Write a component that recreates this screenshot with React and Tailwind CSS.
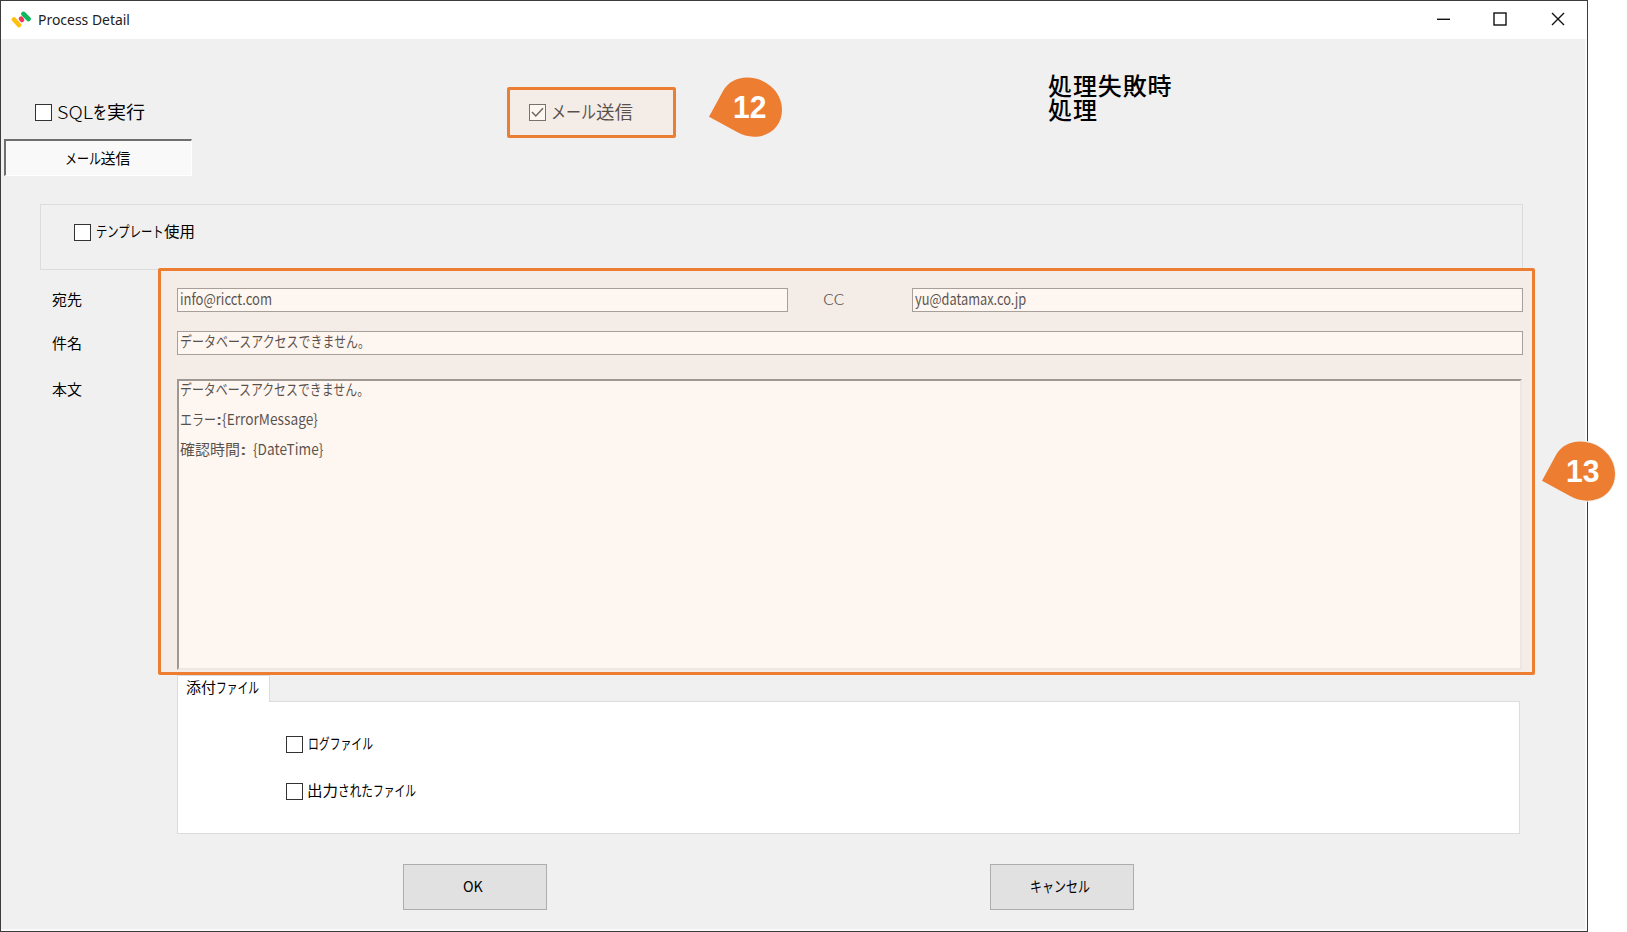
import React, { useLayoutEffect, useRef, useState } from "react";

// Squeezes a run of text into a fixed width, like the narrow UI Gothic kana
const Fit = ({ w, children }) => {
  const ref = useRef(null);
  const [scale, setScale] = useState(1);

  useLayoutEffect(() => {
    setScale(w / ref.current.offsetWidth);
  }, [w, children]);

  return (
    <span className="inline-block whitespace-nowrap" style={{ width: w }}>
      <span
        ref={ref}
        className="inline-block origin-left whitespace-pre"
        style={{ transform: `scaleX(${scale})` }}
      >
        {children}
      </span>
    </span>
  );
};

const Checkbox = ({ checked }) => (
  <span className="block h-[17px] w-[17px] shrink-0 border border-[#333333] bg-white">
    {checked && (
      <svg viewBox="0 0 15 15" className="h-[15px] w-[15px]" fill="none">
        <path d="M2 7L5.800 11L13 3.200" stroke="#222" strokeWidth="1.5" />
      </svg>
    )}
  </span>
);

const Field = ({ className, children }) => (
  <div
    className={`h-6 border border-[#7a7a7a] bg-white pl-0.5 text-[15px] ${className}`}
  >
    {children}
  </div>
);

const Callout = ({ number, className }) => (
  <div className={`absolute h-[62px] w-[76px] ${className}`}>
    <svg viewBox="0 0 76 62" className="absolute inset-0 h-[62px] w-[76px]">
      <path
        d="M2 40.7L16 15Q24 1.7 40 1.6C59 1.6 75 16 75 33.5C75 50 63 60.7 47 60.7Q38 60.5 30 56Z"
        fill="#ed7d31"
        stroke="#f0f0f0"
        strokeWidth="2"
        paintOrder="stroke"
      />
    </svg>
    <span className="absolute top-[15px] left-[26px] font-['Liberation_Sans',sans-serif] text-[31px] leading-[34px] font-bold text-white">
      <Fit w={33}>{number}</Fit>
    </span>
  </div>
);

const Highlight = ({ className }) => (
  <div
    className={`absolute rounded-[2px] border-3 border-[#ed7d31] bg-[#fbe5d6]/35 bg-clip-padding ${className}`}
  ></div>
);

const TitleBar = () => (
  <div className="flex h-[38px] items-center bg-white pb-0.5 pl-2.5">
    <svg viewBox="0 0 20 18" className="h-[18px] w-5" fill="none">
      <path d="M3 9.500L8 15" stroke="#fdc010" strokeWidth="4.6" strokeLinecap="round" />
      <path d="M10 8.600L11 10" stroke="#f0385c" strokeWidth="4.6" strokeLinecap="round" />
      <path d="M12.500 4L17.500 9" stroke="#0fb85c" strokeWidth="4.6" strokeLinecap="round" />
    </svg>
    <div className="ml-[7px] font-['Noto_Sans',sans-serif] text-[15px] text-[#222222]">
      <Fit w={92}>Process Detail</Fit>
    </div>
    <svg
      viewBox="0 0 130 16"
      className="mr-[21px] ml-auto h-4 w-[130px]"
      fill="none"
      stroke="#111"
      strokeWidth="1.4"
    >
      <path d="M1 8.300H14" />
      <rect x="58" y="2" width="12" height="12" />
      <path d="M116 2L128 14M128 2L116 14" />
    </svg>
  </div>
);

const App = () => {
  return (
    <div className="relative h-[932px] w-[1627px] overflow-hidden bg-white font-['Noto_Sans_CJK_JP',sans-serif] text-black">
      <div className="flex h-[932px] w-[1588px] flex-col border border-[#3c3c3c] bg-[#f0f0f0]">
        <TitleBar />

        <div className="flex grow flex-col border-r-2 border-b-2 border-[#fafafa]">
          {/* Action checkboxes */}
          <div className="flex h-[100px] items-start">
            <div className="mt-[65px] ml-[34px] flex w-[494px] items-start text-lg leading-[15px]">
              <Checkbox />
              <div className="ml-[5px] flex">
                <div className="font-light">
                  <Fit w={36}>SQL</Fit>
                </div>
                <Fit w={14}>を</Fit>
                <Fit w={38}>実行</Fit>
              </div>
            </div>
            <div className="mt-[65px] flex w-[519px] items-start text-lg leading-[15px]">
              <Checkbox checked />
              <div className="ml-[5px] flex">
                <Fit w={45}>メール</Fit>
                <Fit w={37}>送信</Fit>
              </div>
            </div>
            <h1 className="mt-[34px] text-2xl leading-6 font-medium tracking-[0.9px]">
              処理失敗時
              <br />
              処理
            </h1>
          </div>

          {/* Tab button */}
          <div className="ml-[3px] flex h-[37px] w-[188px] items-center justify-center border-t-2 border-r border-b border-l-2 border-t-[#6e6e6e] border-r-white border-b-white border-l-[#6e6e6e] bg-[#f9f9f9] pr-0.5 text-[15px]">
            <Fit w={36}>メール</Fit>
            <Fit w={30}>送信</Fit>
          </div>

          {/* Template group */}
          <div className="mt-7 ml-[39px] flex h-[66px] w-[1483px] items-start border border-[#dcdcdc] pt-[19px] pl-[33px] text-[15px] leading-[13px]">
            <Checkbox />
            <div className="ml-[5px] flex">
              <Fit w={68}>テンプレート</Fit>
              <Fit w={31}>使用</Fit>
            </div>
          </div>

          {/* Mail form */}
          <div className="mt-[18px] ml-[51px] flex h-6 items-start text-[15px] leading-[21px]">
            <div className="w-[125px]">宛先</div>
            <Field className="w-[611px] leading-[20px]">
              <Fit w={92}>info@ricct.com</Fit>
            </Field>
            <div className="w-[124px] pl-[35px] font-light">
              <Fit w={21}>CC</Fit>
            </div>
            <Field className="w-[611px] leading-[20px]">
              <Fit w={111}>yu@datamax.co.jp</Fit>
            </Field>
          </div>
          <div className="mt-[19px] ml-[51px] flex h-6 items-start text-[15px] leading-[24px]">
            <div className="w-[125px]">件名</div>
            <Field className="w-[1346px] leading-[18px]">
              <Fit w={190}>データベースアクセスできません。</Fit>
            </Field>
          </div>
          <div className="mt-6 ml-[51px] flex h-[291px] items-start text-[15px]">
            <div className="w-[125px] leading-[20px]">本文</div>
            <div className="h-[291px] w-[1345px] border-t-2 border-r-2 border-b-2 border-l-2 border-t-[#6e6e6e] border-r-[#e6e6e6] border-b-[#e6e6e6] border-l-[#6e6e6e] bg-white pl-px leading-[30px]">
              <div className="-mt-[7px]">
                <Fit w={189}>データベースアクセスできません。</Fit>
              </div>
              <div className="flex">
                <Fit w={36}>エラー</Fit>
                <Fit w={6}>:</Fit>
                <Fit w={96}>{"{ErrorMessage}"}</Fit>
              </div>
              <div className="flex">
                <Fit w={60}>確認時間</Fit>
                <Fit w={13}>: </Fit>
                <Fit w={70}>{"{DateTime}"}</Fit>
              </div>
            </div>
          </div>

          {/* Attachments */}
          <div className="mt-[5px] ml-44 text-[15px] leading-[17px]">
            <div className="relative z-10 flex h-[27px] w-[93px] border-t border-r border-l border-[#dcdcdc] bg-white pt-0.5 pl-2">
              <Fit w={30}>添付</Fit>
              <Fit w={43}>ファイル</Fit>
            </div>
            <div className="-mt-px flex h-[133px] w-[1343px] flex-col gap-[30px] border border-[#dcdcdc] bg-white pt-[34px] pl-[108px] leading-[14px]">
              <div className="flex h-[17px] items-start">
                <Checkbox />
                <div className="ml-[5px]">
                  <Fit w={65}>ログファイル</Fit>
                </div>
              </div>
              <div className="flex h-[17px] items-start">
                <Checkbox />
                <div className="ml-1 flex">
                  <Fit w={31}>出力</Fit>
                  <Fit w={35}>された</Fit>
                  <Fit w={43}>ファイル</Fit>
                </div>
              </div>
            </div>
          </div>

          {/* Buttons */}
          <div className="mt-[30px] ml-[402px] flex gap-[443px] text-[15px]">
            <button className="h-[46px] w-36 border border-[#adadad] bg-[#e1e1e1] pr-1 pb-px">
              <Fit w={20}>OK</Fit>
            </button>
            <button className="h-[46px] w-36 border border-[#adadad] bg-[#e1e1e1] pr-1 pb-px">
              <Fit w={60}>キャンセル</Fit>
            </button>
          </div>
        </div>
      </div>

      {/* Annotations */}
      <Highlight className="top-[87px] left-[507px] h-[51px] w-[169px]" />
      <Highlight className="top-[268px] left-[158px] h-[407px] w-[1377px]" />
      <Callout number={12} className="top-[76px] left-[707px]" />
      <Callout number={13} className="top-[440px] left-[1540px]" />
    </div>
  );
};

export default App;
